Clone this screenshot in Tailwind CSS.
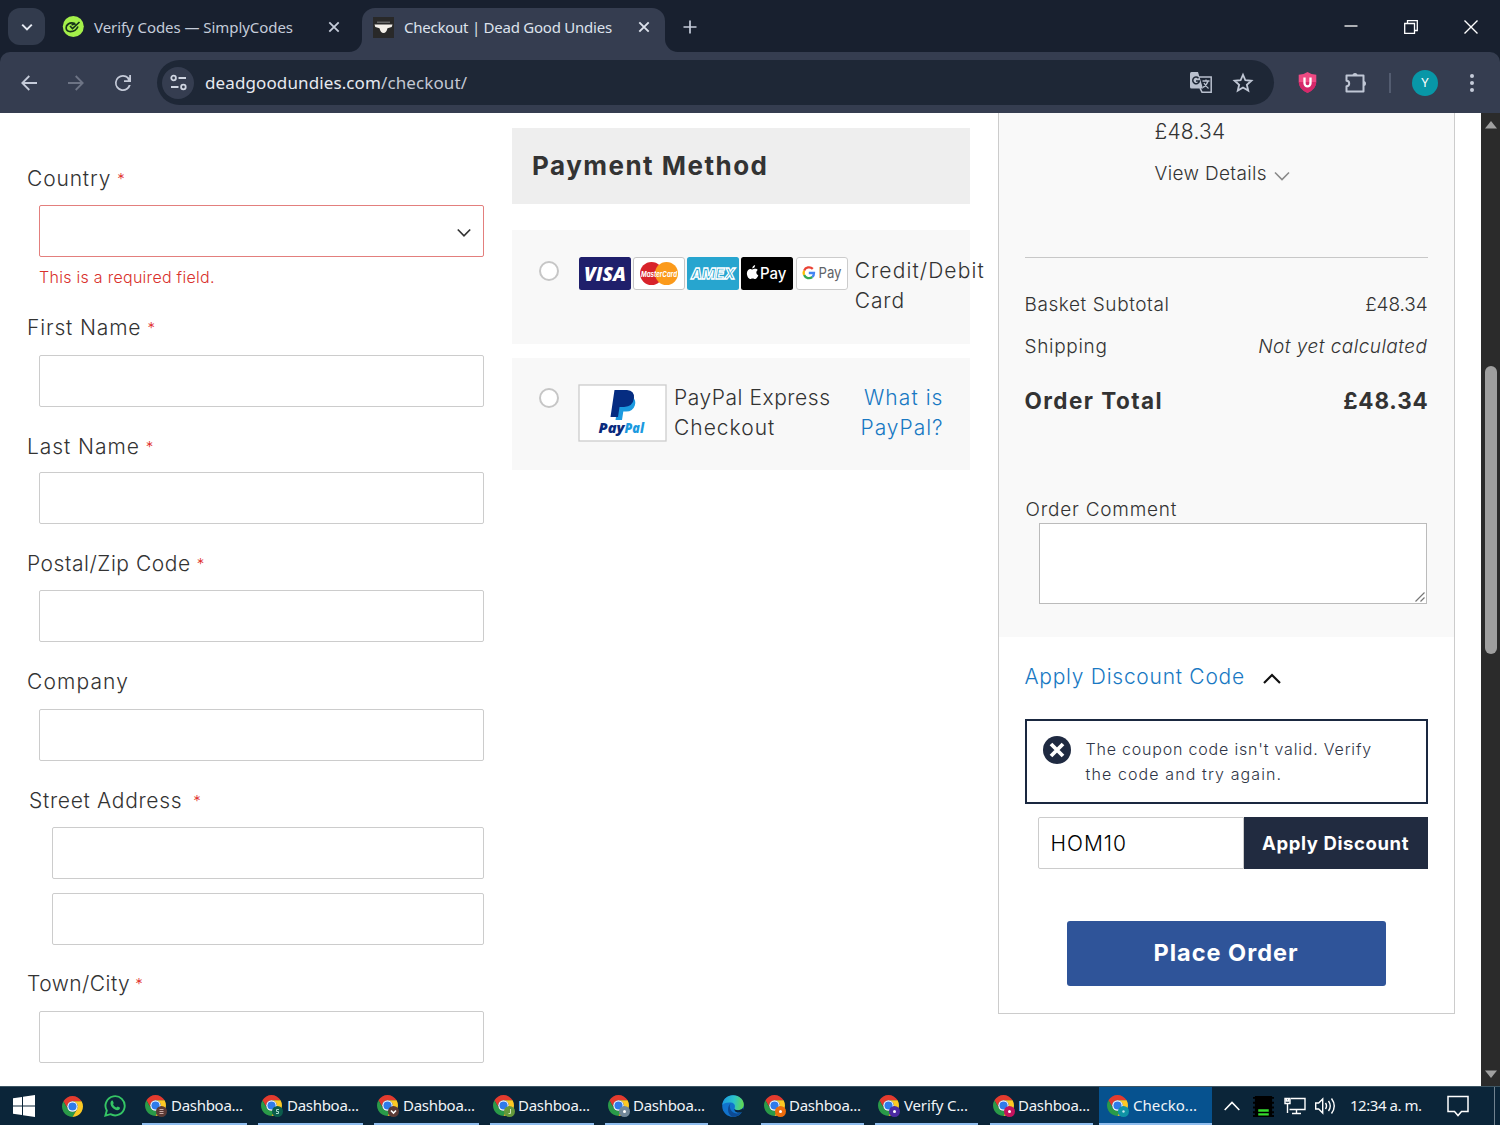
<!DOCTYPE html>
<html lang="en">
<head>
<meta charset="utf-8">
<title>Checkout | Dead Good Undies</title>
<script src="https://cdn.jsdelivr.net/npm/@tailwindcss/browser@4"></script>
</head>
<body class="bg-white">
<svg class="hidden" aria-hidden="true">
  <symbol id="chrome" viewBox="0 0 48 48">
    <path fill="#e33b2e" d="M24 12H44.78A24 24 0 0 0 3.22 12L13.6 30A12 12 0 0 1 24 12Z"/>
    <path fill="#2a9a48" d="M13.6 30L3.22 12A24 24 0 0 0 24 48L34.4 30A12 12 0 0 1 13.6 30Z"/>
    <path fill="#fcc924" d="M24 12H44.78A24 24 0 0 1 24 48L34.4 30A12 12 0 0 0 24 12Z"/>
    <circle cx="24" cy="24" r="12" fill="#fff"/><circle cx="24" cy="24" r="9.3" fill="#2f7bea"/>
  </symbol>
</svg>
<div class="flex h-[1125px] w-[1500px] flex-col overflow-hidden bg-[#18202f]">

  <!-- Tab strip -->
  <header class="flex h-[52px] shrink-0 items-start bg-[#18202f] font-['Noto_Sans',sans-serif] text-[15px] text-[#c5ccda]">
    <div class="ml-2 mt-2 flex h-[37px] w-[37px] items-center justify-center rounded-[12px] bg-[#323b4d]">
      <svg class="size-[12px]" viewBox="0 0 12 12" fill="none" stroke="#e6eaf2" stroke-width="2"><path d="M1.2 3.6 6 8.4l4.800-4.800"/></svg>
    </div>
    <div class="ml-[17px] flex h-[54px] w-[300px] items-center">
      <svg class="size-[22px]" viewBox="0 0 22 22"><circle cx="11.300" cy="10.500" r="10.500" fill="#a4f04a"/><g fill="none" stroke="#16321a" stroke-width="1.700"><path d="M13 7.500q-6-2-8.500 2.500-1.500 4.500 3 5.500 6 .5 8.500-5"/><path d="m8 10 2.500 2.500L17.500 6M9.500 9l4-1.200"/></g></svg>
      <span class="ml-[10px] w-[225px] whitespace-nowrap tracking-[-0.060px]">Verify Codes — SimplyCodes</span>
      <svg class="ml-[9px] size-[12px]" viewBox="0 0 12 12" stroke="#c5ccda" stroke-width="1.800"><path d="m1.300 1.300 9.400 9.400m0-9.400-9.400 9.400"/></svg>
    </div>
    <div class="relative mt-2 flex h-[44px] w-[303px] items-center rounded-t-[13px] bg-[#353d50] pb-[6px] text-[#dde2ec]">
      <svg class="absolute -left-[13px] bottom-0 size-[13px]" viewBox="0 0 13 13" fill="#353d50"><path d="M13 0v13H0A13 13 0 0 0 13 0Z"/></svg>
      <svg class="absolute -right-[13px] bottom-0 size-[13px]" viewBox="0 0 13 13" fill="#353d50"><path d="M0 0v13h13A13 13 0 0 1 0 0Z"/></svg>
      <svg class="ml-[11px] size-[21px]" viewBox="0 0 21 21"><path fill="#292929" d="M0 0h21v21H0z"/><path fill="#666" d="M4 4.500h13v1.500H4z"/><path fill="#f4f0ea" d="M1.500 7.500h18l-.8 2.500-4.200 1.200q-1 4.500-4 4.800-3-.3-4-4.800L2.300 10z"/></svg>
      <span class="ml-[10px] w-[220px] whitespace-nowrap tracking-[-0.240px]">Checkout | Dead Good Undies</span>
      <svg class="ml-[14px] size-[12px]" viewBox="0 0 12 12" stroke="#dde2ec" stroke-width="1.900"><path d="m1.300 1.300 9.400 9.400m0-9.400-9.400 9.400"/></svg>
    </div>
    <svg class="ml-[18px] mt-[20px] size-[14px]" viewBox="0 0 14 14" stroke="#c5ccda" stroke-width="1.700"><path d="M7 .5v13M.5 7h13"/></svg>
    <div class="ml-auto mr-[22px] mt-[20px] flex gap-[46px]" >
      <svg class="size-[14px]" viewBox="0 0 14 14" stroke="#fff" stroke-width="1.300"><path d="M.5 6h13"/></svg>
      <svg class="size-[14px]" viewBox="0 0 14 14" fill="none" stroke="#fff" stroke-width="1.300"><path d="M.7 3.500h9.800v9.800H.7zM3.500 3.500V.7h9.800v9.800h-2.800"/></svg>
      <svg class="size-[14px]" viewBox="0 0 14 14" stroke="#fff" stroke-width="1.400"><path d="m.5.5 13 13m0-13-13 13"/></svg>
    </div>
  </header>

  <!-- Toolbar -->
  <div class="flex h-[61px] shrink-0 items-center rounded-t-[10px] bg-[#353d50] font-['Noto_Sans',sans-serif]">
    <svg class="ml-[21px] size-[16px]" viewBox="0 0 16 16" fill="none" stroke="#c5cbd9" stroke-width="1.800"><path d="M16 8H1.500M8.300 1 1.300 8l7 7"/></svg>
    <svg class="ml-[31px] size-[16px]" viewBox="0 0 16 16" fill="none" stroke="#6d7485" stroke-width="1.800"><path d="M0 8h14.500M7.700 1l7 7-7 7"/></svg>
    <svg class="ml-[27px] size-[24px]" viewBox="0 0 24 24" fill="#c5cbd9"><path d="M17.650 6.350A7.960 7.960 0 0 0 12 4a8 8 0 1 0 7.730 10h-2A6.200 6.200 0 1 1 12 5.800c1.660 0 3.240.690 4.320 1.880L17 9.200h-4V11h7V4h-1.800v3z"/></svg>
    <div class="ml-[22px] flex h-[45px] w-[1117px] items-center rounded-full bg-[#1e2736] pl-[5px]">
      <div class="flex size-[32px] items-center justify-center rounded-full bg-[#353d50]">
        <svg class="size-[17px]" viewBox="0 0 17 17" fill="none" stroke="#d0d6e2" stroke-width="1.800"><circle cx="3.600" cy="4" r="2.300"/><circle cx="13.400" cy="13" r="2.300"/><path d="M8.500 4H16M1 13h7.500"/></svg>
      </div>
      <span class="ml-[11px] whitespace-nowrap text-[17px] tracking-[0.110px] text-[#e6e9f0]">deadgoodundies.com<span class="text-[#c3c8d3]">/checkout/</span></span>
      <svg class="ml-auto size-[22px]" viewBox="0 0 22 22"><path fill="none" stroke="#b9c0ce" stroke-width="1.500" d="M9 5h12.200v15.200H12l-2-4"/><path fill="#b9c0ce" d="M0 1.500Q0 0 1.500 0H8l5 16.500H1.500Q0 16.500 0 15z"/><path fill="none" stroke="#1e2736" stroke-width="1.500" d="M8.500 6.200a3.300 3.300 0 1 0 .8 2.800H6"/><path fill="none" stroke="#b9c0ce" stroke-width="1.300" d="M12.500 9h7M16 7.500V9m2 0q-1 4-5 6.500M14 11q2 3.500 4.500 5.500"/></svg>
      <svg class="ml-[20px] mr-[20px] size-[22px]" viewBox="0 0 24 24" fill="none" stroke="#c0c7d5" stroke-width="2"><path d="m12 3 2.600 6 6.500.600-4.900 4.300 1.500 6.400-5.700-3.400-5.700 3.400 1.500-6.400-4.900-4.300 6.500-.600z"/></svg>
    </div>
    <svg class="ml-[23px] size-[21px]" viewBox="0 0 21 21"><path fill="#ef4a83" d="M10.500 0 Q14 2.500 19.300 2.800V10q0 7-8.800 11Q1.700 17 1.700 10V2.800Q7 2.500 10.500 0Z"/><path fill="#c4135a" opacity=".6" d="M19.300 10q0 7-8.800 11Q1.700 17 1.700 10z"/><path fill="none" stroke="#fff" stroke-width="2.300" d="M7.500 5.500v5.800a3 3 0 0 0 6 0V5.500"/></svg>
    <svg class="ml-[25px] size-[24px]" viewBox="0 0 24 24" fill="none" stroke="#c0c7d5" stroke-width="2"><path stroke-linejoin="round" d="M3.500 4.500h17v16h-17v-5.300a2.700 2.700 0 0 0 0-5.400z"/><path fill="#c0c7d5" stroke="none" d="M9.500 4.500a2.500 2.500 0 0 1 5 0zM20.500 10a2.500 2.500 0 0 1 0 5z"/></svg>
    <div class="ml-[22px] h-[20px] w-[2px] bg-[#535c70]"></div>
    <div class="ml-[21px] flex size-[26px] items-center justify-center rounded-full bg-[#0897a7] text-[13px] text-white">Y</div>
    <div class="ml-[32px] flex flex-col gap-[3px]"><i class="size-1 rounded-full bg-[#c5cbd9]"></i><i class="size-1 rounded-full bg-[#c5cbd9]"></i><i class="size-1 rounded-full bg-[#c5cbd9]"></i></div>
  </div>

  <!-- Page -->
  <main class="flex h-[973px] shrink-0 overflow-hidden bg-white font-['Inter',sans-serif] text-[21px] font-light leading-[30px] text-[#333]">
    <!-- Shipping address -->
    <form class="ml-[27px] w-[456.500px] whitespace-nowrap pt-[50px]">
      <div class="flex pt-px -mb-px"><span class="tracking-[0.850px]">Country</span><span class="ml-[6px] text-[15px] text-[#e02b27]">*</span></div>
      <div class="ml-3 mt-3 flex h-[52px] items-center justify-end rounded-[2px] border border-[#e37f7d] pr-[12px]"><svg class="mt-[3px] size-[14px]" viewBox="0 0 14 14" fill="none" stroke="#333" stroke-width="1.700"><path d="m.8 3.500 6.200 6.300 6.200-6.300"/></svg></div>
      <div class="ml-3 mt-[10px] text-[16px] leading-5 tracking-[0.280px] text-[#d9302c]">This is a required field.</div>
      <div class="mt-[26px] flex"><span class="tracking-[0.860px]">First Name</span><span class="ml-[6px] text-[15px] text-[#e02b27]">*</span></div>
      <div class="ml-3 mt-3 h-[52px] rounded-[2px] border border-[#ccc]"></div>
      <div class="mt-[25px] flex"><span class="tracking-[0.940px]">Last Name</span><span class="ml-[6px] text-[15px] text-[#e02b27]">*</span></div>
      <div class="ml-3 mt-[10px] h-[52px] rounded-[2px] border border-[#ccc]"></div>
      <div class="mt-[25px] flex"><span class="tracking-[0.540px]">Postal/Zip Code</span><span class="ml-[6px] text-[15px] text-[#e02b27]">*</span></div>
      <div class="ml-3 mt-[11px] h-[52px] rounded-[2px] border border-[#ccc]"></div>
      <div class="mt-[25px] tracking-[1.130px]">Company</div>
      <div class="ml-3 mt-3 h-[52px] rounded-[2px] border border-[#ccc]"></div>
      <div class="ml-[2px] mt-[25px] flex"><span class="tracking-[0.690px]">Street Address</span><span class="ml-[11px] text-[15px] text-[#e02b27]">*</span></div>
      <div class="ml-[25px] mt-[11px] h-[52px] rounded-[2px] border border-[#ccc]"></div>
      <div class="ml-[25px] mt-[14px] h-[52px] rounded-[2px] border border-[#ccc]"></div>
      <div class="mt-[24px] flex"><span class="tracking-[0.450px]">Town/City</span><span class="ml-[5px] text-[15px] text-[#e02b27]">*</span></div>
      <div class="ml-3 mt-3 h-[52px] rounded-[2px] border border-[#ccc]"></div>
    </form>

    <!-- Payment method -->
    <section class="ml-[28.500px] w-[457.500px] shrink-0 pt-[15px]">
      <h2 class="flex h-[76px] items-center bg-[#eee] pl-5 text-[26px] font-bold tracking-[1.480px]">Payment Method</h2>
      <div class="mt-[26px] flex h-[114px] items-start whitespace-nowrap bg-[#f8f8f8] pt-[26px]">
        <div class="ml-[27px] mt-[5px] size-5 shrink-0 rounded-full border-2 border-[#c6c6c6] bg-white"></div>
        <div class="ml-[19.500px] mt-px flex shrink-0 gap-[2.300px]">
          <svg class="h-[33px] w-[52px]" viewBox="0 0 52 33"><rect width="52" height="33" rx="2.500" fill="#1f1f6b"/><text x="5" y="23.500" textLength="42" lengthAdjust="spacingAndGlyphs" font-family="Open Sans,sans-serif" font-style="italic" font-weight="800" font-size="20" fill="#fff">VISA</text></svg>
          <svg class="h-[33px] w-[52px]" viewBox="0 0 52 33"><rect x=".5" y=".5" width="51" height="32" rx="2.500" fill="#fff" stroke="#c6c6c6"/><circle cx="18.500" cy="16.500" r="11.500" fill="#d8232a"/><circle cx="33.500" cy="16.500" r="11.500" fill="#fb9a1b"/><text x="8" y="20" textLength="36" lengthAdjust="spacingAndGlyphs" font-family="Inter,sans-serif" font-style="italic" font-weight="700" font-size="8" fill="#fff">MasterCard</text></svg>
          <svg class="h-[33px] w-[52px]" viewBox="0 0 52 33"><rect width="52" height="33" rx="2.500" fill="#27a5cf"/><text x="4" y="22" textLength="44" lengthAdjust="spacingAndGlyphs" font-family="Inter,sans-serif" font-style="italic" font-weight="800" font-size="15" fill="#27a5cf" stroke="#fff" stroke-width="1.300">AMEX</text></svg>
          <svg class="h-[33px] w-[52px]" viewBox="0 0 52 33"><rect width="52" height="33" rx="2.500" fill="#000"/><path fill="#fff" d="M11.300 12.500c.9 0 1.700-.7 3-.7 1 0 1.900.5 2.500 1.200-2.100 1.300-1.800 4.400.5 5.300-.7 1.900-1.900 3.700-3.200 3.700-.9 0-1.300-.6-2.500-.6s-1.600.6-2.400.6c-1.900 0-3.400-3.500-3.300-5.700.1-2.600 1.700-4.400 3.500-4.400.8 0 1.200.6 1.900.6ZM11.300 11.500c-.1-1.700 1.200-3.200 2.800-3.400.2 1.800-1.300 3.400-2.800 3.400Z"/><text x="19" y="21.500" textLength="26.500" lengthAdjust="spacingAndGlyphs" font-family="Inter,sans-serif" font-weight="500" font-size="15.500" fill="#fff">Pay</text></svg>
          <svg class="h-[33px] w-[52px]" viewBox="0 0 52 33"><rect x=".5" y=".5" width="51" height="32" rx="2.500" fill="#fff" stroke="#ccc"/><g fill="none" stroke-width="2.300"><path stroke="#ea4335" d="M8.100 13.700a5.300 5.300 0 0 1 8.700-1.800"/><path stroke="#fbbc04" d="M8.100 18a5.300 5.300 0 0 1 0-4.300"/><path stroke="#34a853" d="M16.300 20a5.300 5.300 0 0 1-8.200-2"/><path stroke="#4285f4" d="M12.800 16h5.200a5.300 5.300 0 0 1-1.700 4"/></g><text x="22.500" y="21" textLength="23" lengthAdjust="spacingAndGlyphs" font-family="Inter,sans-serif" font-weight="400" font-size="15" fill="#5f6368">Pay</text></svg>
        </div>
        <div class="ml-[7px]"><div class="tracking-[1.100px]">Credit/Debit</div><div class="tracking-[0.900px]">Card</div></div>
      </div>
      <div class="mt-[14px] flex h-[112px] items-start whitespace-nowrap bg-[#f8f8f8] pt-[25px]">
        <div class="ml-[27px] mt-[5px] size-5 shrink-0 rounded-full border-2 border-[#c6c6c6] bg-white"></div>
        <svg class="ml-[19px] mt-[1px] h-[58px] w-[89px]" viewBox="0 0 89 58"><rect x="1" y="1" width="87" height="56" fill="#fff" stroke="#ccc" stroke-width="1.300"/><path fill="#1b9ae0" d="M41 13h13.500q4 3 2.300 8.500-2 6-8.500 6h-3L44 36h-6.500z"/><path fill="#052c81" d="M36.500 6H49q7.500.5 7 8-1 8.500-10 9h-4.500L40 33h-7.500z"/><text x="20.500" y="49" textLength="26" lengthAdjust="spacingAndGlyphs" font-family="Open Sans,sans-serif" font-style="italic" font-weight="800" font-size="13.500" fill="#0a2a7d">Pay</text><text x="46.500" y="49" textLength="19.500" lengthAdjust="spacingAndGlyphs" font-family="Open Sans,sans-serif" font-style="italic" font-weight="800" font-size="13.500" fill="#1b9ae0">Pal</text></svg>
        <div class="ml-[7px]"><div class="tracking-[0.540px]">PayPal Express</div><div class="tracking-[1px]">Checkout</div></div>
        <div class="ml-auto mr-[26px] text-right text-[#1979c3]"><div class="tracking-[1.050px]">What is</div><div class="tracking-[0.950px]">PayPal?</div></div>
      </div>
    </section>

    <!-- Order summary -->
    <aside class="ml-[28px] flex h-[901px] w-[457px] shrink-0 flex-col whitespace-nowrap border border-t-0 border-[#ccc] text-[19px]">
      <div class="h-[524px] shrink-0 bg-[#f9f9f9] px-[26px]">
        <div class="pl-[130px] pt-[4px]">
          <div class="text-[21px] tracking-[0.200px]">£48.34</div>
          <div class="mt-3 flex items-center"><span class="tracking-[0.340px]">View Details</span><svg class="ml-[7px] mt-[3px] size-[16px]" viewBox="0 0 16 16" fill="none" stroke="#8a8a8a" stroke-width="1.600"><path d="m1 4.500 7 7 7-7"/></svg></div>
        </div>
        <div class="mt-[68px] border-t border-[#c8c8c8]"></div>
        <div class="mt-[32px] flex justify-between"><span class="tracking-[0.580px]">Basket Subtotal</span><span class="tracking-[-0.100px]">£48.34</span></div>
        <div class="mt-[12px] flex justify-between"><span class="tracking-[0.680px]">Shipping</span><span class="italic tracking-[0.480px]">Not yet calculated</span></div>
        <div class="mt-[24px] flex justify-between text-[22.500px] font-bold"><span class="tracking-[1.450px]">Order Total</span><span class="-mr-px tracking-[0.800px]">£48.34</span></div>
        <div class="-mb-px mt-[80px] pl-px leading-[28px] tracking-[0.770px]">Order Comment</div>
        <div class="relative ml-[14px] h-[81px] w-[388px] border border-[#bbb] bg-white"><svg class="absolute bottom-[1px] right-[1px] size-[10px]" viewBox="0 0 10 10" stroke="#777" stroke-width="1.200"><path d="m.5 9.500 9-9m-4 9 4-4"/></svg></div>
      </div>
      <div class="px-[26px] pt-[25px]">
        <div class="flex items-center text-[21px] text-[#1979c3]"><span class="tracking-[0.730px]">Apply Discount Code</span><svg class="ml-[18px] mt-[3px] size-[18px]" viewBox="0 0 18 18" fill="none" stroke="#111" stroke-width="2.200"><path d="m1 13 8-8 8 8"/></svg></div>
        <div class="mt-[27px] flex h-[85px] w-[403px] items-start border-2 border-[#1a2840] pl-[16px] pt-[15px] text-[16px] leading-[25px] text-[#2f3546]">
          <svg class="size-[28px] shrink-0" viewBox="0 0 28 28"><circle cx="14" cy="14" r="14" fill="#1f2a41"/><path stroke="#fff" stroke-width="3.800" d="m8 8 12 12m0-12L8 20"/></svg>
          <div class="ml-[15px] mt-px"><div class="tracking-[0.800px]">The coupon code isn't valid. Verify</div><div class="tracking-[1.110px]">the code and try again.</div></div>
        </div>
        <div class="ml-[13px] mt-[13px] flex h-[52px] w-[390px]">
          <div class="flex w-[206px] items-center rounded-l-[2px] border border-[#ccc] pl-3 pt-px text-[21px] tracking-[0.950px] text-black">HOM10</div>
          <div class="flex flex-1 items-center justify-center bg-[#212b40] text-[18.500px] font-bold tracking-[0.600px] text-white">Apply Discount</div>
        </div>
        <div class="ml-[42px] mt-[52px] flex h-[65px] w-[319px] items-center justify-center rounded-[3px] bg-[#2f5499] pb-px text-[23.500px] font-bold tracking-[1px] text-white">Place Order</div>
      </div>
    </aside>

    <!-- Scrollbar -->
    <div class="ml-auto flex w-[19px] shrink-0 flex-col items-center bg-[#2b2b2b]">
      <svg class="mt-[8px] h-[8px] w-[12px]" viewBox="0 0 12 8" fill="#a0a0a0"><path d="m6 0 6 7.500H0z"/></svg>
      <div class="mt-[237px] h-[288px] w-[12px] rounded-full bg-[#9f9f9f]"></div>
      <svg class="mb-[8px] mt-auto h-[8px] w-[12px]" viewBox="0 0 12 8" fill="#a0a0a0"><path d="M6 8 0 .5h12z"/></svg>
    </div>
  </main>

  <!-- Taskbar -->
  <footer class="flex h-[39px] shrink-0 items-stretch whitespace-nowrap border-t border-[#3d5563] bg-[#0b2539] font-['Noto_Sans',sans-serif] text-[15px] text-[#f1f4f7]">
    <svg class="ml-[13px] size-[22px] self-center" viewBox="0 0 22 22" fill="#fff"><path d="m0 3.200 9-1.300v8.500H0zM10 1.800 22 0v10.400H10zM0 11.500h9V20l-9-1.300zM10 11.500h12V22l-12-1.800z"/></svg>
    <svg class="ml-[27px] size-[21px] self-center"><use href="#chrome"/></svg>
    <svg class="ml-[21px] size-[22px] self-center" viewBox="0 0 22 22"><path fill="none" stroke="#35c565" stroke-width="1.900" d="m1.400 20.600 1.400-5A9.600 9.600 0 1 1 6.500 19.200z"/><path fill="#35c565" d="M7.500 5.800c.5-.5 1.200-.4 1.400.1l.8 2c.1.400-.7 1.200-.7 1.400.6 1.400 1.900 2.600 3.400 3.200.3.100.9-1.100 1.400-1l2 1c.4.300.1 1.500-.5 2-2.200 1.700-5.300-.2-7-2-1.600-1.800-2.700-4.800-.8-6.700Z"/></svg>

    <div class="ml-[16px] flex w-[105px] items-center border-b-2 border-[#8fbdee] pl-[3px] pt-px">
      <span class="relative size-[21px]"><svg class="size-[21px]"><use href="#chrome"/></svg><svg class="absolute -bottom-px -right-px size-[11px]" viewBox="0 0 11 11"><circle cx="5.500" cy="5.500" r="5.500" fill="#5b3a36"/><path stroke="#c9aaa5" d="M3.500 3.500h4m-4 2h4m-4 2h4"/></svg></span><span class="ml-[5px] tracking-[-0.290px]">Dashboa...</span></div>
    <div class="ml-[11px] flex w-[105px] items-center border-b-2 border-[#8fbdee] pl-[3px] pt-px">
      <span class="relative size-[21px]"><svg class="size-[21px]"><use href="#chrome"/></svg><svg class="absolute -bottom-px -right-px size-[11px]" viewBox="0 0 11 11"><circle cx="5.500" cy="5.500" r="5.500" fill="#0b5c4c"/><path fill="none" stroke="#a7d8cb" d="M7 3.500H4.500v2h2v2H4"/></svg></span><span class="ml-[5px] tracking-[-0.290px]">Dashboa...</span></div>
    <div class="ml-[11px] flex w-[105px] items-center border-b-2 border-[#8fbdee] pl-[3px] pt-px">
      <span class="relative size-[21px]"><svg class="size-[21px]"><use href="#chrome"/></svg><svg class="absolute -bottom-px -right-px size-[11px]" viewBox="0 0 11 11"><circle cx="5.500" cy="5.500" r="5.500" fill="#5b3a36"/><path fill="none" stroke="#fff" stroke-width="1.600" d="m3 4.500 2.500 2.500L8 4.500"/></svg></span><span class="ml-[5px] tracking-[-0.290px]">Dashboa...</span></div>
    <div class="ml-[11px] flex w-[104px] items-center border-b-2 border-[#8fbdee] pl-[3px] pt-px">
      <span class="relative size-[21px]"><svg class="size-[21px]"><use href="#chrome"/></svg><svg class="absolute -bottom-px -right-px size-[11px]" viewBox="0 0 11 11"><circle cx="5.500" cy="5.500" r="5.500" fill="#659a3b"/><path fill="none" stroke="#cfe6b8" d="M6.500 3v4.500H4.500"/></svg></span><span class="ml-[4px] tracking-[-0.290px]">Dashboa...</span></div>
    <div class="ml-[11px] flex w-[103px] items-center border-b-2 border-[#8fbdee] pl-[3px] pt-px">
      <span class="relative size-[21px]"><svg class="size-[21px]"><use href="#chrome"/></svg><svg class="absolute -bottom-px -right-px size-[11px]" viewBox="0 0 11 11"><circle cx="5.500" cy="5.500" r="5.500" fill="#71889a"/><circle cx="5.500" cy="5.500" r="1.500" fill="#fff"/></svg></span><span class="ml-[4px] tracking-[-0.290px]">Dashboa...</span></div>
    <svg class="ml-[14px] size-[22px] self-center" viewBox="0 0 22 22"><defs><linearGradient id="e1" x1="0" y1=".3" x2="1" y2=".4"><stop offset="0" stop-color="#1a9be0"/><stop offset=".55" stop-color="#2cc4c9"/><stop offset="1" stop-color="#62d84e"/></linearGradient></defs><circle cx="11" cy="11" r="10.800" fill="#1173cc"/><path fill="url(#e1)" d="M.3 10C1 4 5.500.2 11 .2c6.500 0 10.800 4.600 10.800 9.300 0 3.500-2.700 5.500-5.800 5.500-2.500 0-3.800-.9-3.500-1.600 1-1.400.8-5.400-3.500-5.900C4.500 7 1 8.500.3 10Z"/><path fill="#0d4a94" d="M8.500 8.500c-2 3.500.5 9.500 6 10 2 .1 4.500-.8 5.500-1.500-2 3.200-5.800 5-9.500 4.700C5.500 20 4.500 12 8.500 8.500Z"/><path fill="#0b2539" d="M12.500 13.200c-.4 1 1 2 3.600 2 2 0 3.700-.8 4.900-2.200l1 3-2 1.300c-3.500.9-8.500 0-7.500-4.100Z"/></svg>
    <div class="ml-[17px] flex w-[103px] items-center border-b-2 border-[#8fbdee] pl-[3px] pt-px">
      <span class="relative size-[21px]"><svg class="size-[21px]"><use href="#chrome"/></svg><svg class="absolute -bottom-px -right-px size-[11px]" viewBox="0 0 11 11"><circle cx="5.500" cy="5.500" r="5.500" fill="#ec6c0c"/><circle cx="5.500" cy="5.500" r="1.500" fill="#fff"/></svg></span><span class="ml-[4px] tracking-[-0.290px]">Dashboa...</span></div>
    <div class="ml-[11px] flex w-[103px] items-center border-b-2 border-[#8fbdee] pl-[3px] pt-px">
      <span class="relative size-[21px]"><svg class="size-[21px]"><use href="#chrome"/></svg><svg class="absolute -bottom-px -right-px size-[11px]" viewBox="0 0 11 11"><circle cx="5.500" cy="5.500" r="5.500" fill="#4b2aa3"/><circle cx="5.500" cy="5.500" r="1.500" fill="#fff"/></svg></span><span class="ml-[5px] tracking-[-0.150px]">Verify C...</span></div>
    <div class="ml-[12px] flex w-[103px] items-center border-b-2 border-[#8fbdee] pl-[3px] pt-px">
      <span class="relative size-[21px]"><svg class="size-[21px]"><use href="#chrome"/></svg><svg class="absolute -bottom-px -right-px size-[11px]" viewBox="0 0 11 11"><circle cx="5.500" cy="5.500" r="5.500" fill="#c3135e"/><circle cx="5.500" cy="5.500" r="1.500" fill="#fff"/></svg></span><span class="ml-[4px] tracking-[-0.290px]">Dashboa...</span></div>
    <div class="ml-[6px] flex w-[113px] items-center border-b-2 border-[#8fbdee] bg-[#06528f] pl-[8px] pt-px">
      <span class="relative size-[21px]"><svg class="size-[21px]"><use href="#chrome"/></svg><svg class="absolute -bottom-px -right-px size-[11px]" viewBox="0 0 11 11"><circle cx="5.500" cy="5.500" r="5.500" fill="#0f93a5"/><circle cx="5.500" cy="5.500" r="1.200" fill="#bfe8ee"/></svg></span><span class="ml-[5px] tracking-[0.060px]">Checko...</span></div>

    <svg class="ml-[12px] h-[10px] w-[16px] self-center" viewBox="0 0 16 10" fill="none" stroke="#fff" stroke-width="1.600"><path d="m.7 9 7.300-7.500L15.300 9"/></svg>
    <svg class="ml-[13px] size-[21px] self-center" viewBox="0 0 22 22"><path fill="#000" d="M2 0h18v22H2z"/><path stroke="#000" stroke-width="2" d="M0 2h22M0 7h22M0 12h22M0 17h22M0 21h22"/><path fill="#35dc2d" d="M5.500 14h11v2.500h-11zM5.500 18h11v2.500h-11z"/></svg>
    <svg class="ml-[10px] size-[22px] self-center" viewBox="0 0 22 22" fill="none" stroke="#fff" stroke-width="1.400"><path d="M7 3.500h14v11H5.500M12.500 14.500V18M8 18.500h9M1 3.500h5v5H1zM3.500 8.500V18M2.500 3.500v2.500h2V3.500"/></svg>
    <svg class="ml-[9px] size-[22px] self-center" viewBox="0 0 22 22" fill="none" stroke="#fff" stroke-width="1.400"><path d="M.7 8h3l4-4v14l-4-4h-3zM10.500 8q2 3 0 6M13.500 6q3.500 5 0 10M16.500 3.500q5.500 7.500 0 15"/></svg>
    <span class="ml-[13px] w-[73px] self-center pb-px tracking-[-0.460px]">12:34 a. m.</span>
    <svg class="ml-[24px] size-[22px] self-center" viewBox="0 0 22 22" fill="none" stroke="#fff" stroke-width="1.500"><path d="M1 1.500h20v15h-6.500L11 20.500l-3.500-4H1z"/></svg>
    <div class="ml-auto mr-[5px] w-px bg-[#71828f]"></div>
  </footer>
</div>
</body>
</html>
